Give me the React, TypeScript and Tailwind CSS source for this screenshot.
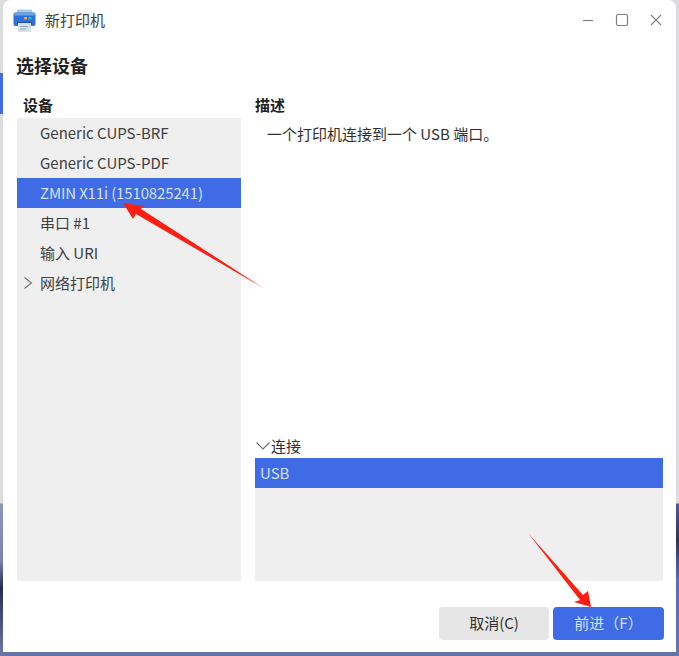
import React from "react";

function PrinterIcon() {
  return (
    <svg width="23" height="23" viewBox="0 0 23 23" className="shrink-0">
      <rect x="4" y="0.5" width="15" height="5" rx="1" fill="#a6cfe4" />
      <path d="M0.5 6 Q0.5 3.5 3 3.5 H20 Q22.5 3.5 22.5 6 V15 Q22.5 17 20.5 17 H2.5 Q0.5 17 0.5 15 Z" fill="#2f6fdc" />
      <rect x="0.5" y="3.5" width="22" height="3" rx="1.5" fill="#6ba5e6" />
      <rect x="11" y="8" width="3" height="2.5" rx="1" fill="#f2b93f" />
      <rect x="15.5" y="8" width="3" height="2.5" rx="1" fill="#35c9b0" />
      <rect x="4" y="13" width="15" height="1.5" fill="#1d4fa8" />
      <rect x="5" y="14" width="13" height="9" fill="#d3e1ea" />
      <rect x="7" y="17" width="8" height="1" fill="#9aa8b4" />
      <rect x="7" y="19.5" width="6" height="1" fill="#9aa8b4" />
    </svg>
  );
}

function Row({ label, selected, arrow }: { label: string; selected?: boolean; arrow?: boolean }) {
  return (
    <div className={`relative flex h-[30px] items-center pl-[23px] text-[15px] ${selected ? "bg-[#3f6ce6] tracking-[-0.14px] text-[#d5e0fa]" : "text-[#404040]"}`}>
      {arrow && (
        <svg width="10" height="14" viewBox="0 0 10 14" className="absolute left-[6px] top-[8px]">
          <path d="M1.5 1.5 L8.5 7 L1.5 12.5" fill="none" stroke="#707070" strokeWidth="1.1" />
        </svg>
      )}
      {label}
    </div>
  );
}

export default function App() {
  return (
    <div className="relative flex h-[656px] w-[679px] overflow-hidden bg-[linear-gradient(to_bottom,#dcdcde_0,#dcdcde_503px,#6472a8_503px,#6472a8_100%)] font-['Noto_Sans_CJK_SC','Noto_Sans',sans-serif] text-[#303030]">
      <div className="flex w-[3px] shrink-0 flex-col bg-[linear-gradient(to_bottom,#dcdcde_0,#dcdcde_503px,#9095bc_504px,#7d83b0_560px,#262d4c_588px,#3a4068_605px,#7078a8_656px)]">
        <div className="h-[73px]" />
        <div className="h-[41px] bg-[#3f6ce6]" />
      </div>
      <div className="flex h-[652px] w-[673px] shrink-0 flex-col rounded-t-[8px] bg-white">
        <div className="flex h-[42px] shrink-0 items-center pl-[10px] pr-[13px]">
          <div className="mb-[1px]">
            <PrinterIcon />
          </div>
          <span className="ml-[9px] pb-[1px] text-[15px] text-[#404040]">新打印机</span>
          <div className="ml-auto flex items-center gap-[20px] pb-[3px] text-[#7a7a7a]">
            <svg width="14" height="14" viewBox="0 0 14 14"><path d="M2 7.5 H12" stroke="#808080" strokeWidth="1.2" /></svg>
            <svg width="14" height="14" viewBox="0 0 14 14"><rect x="1.5" y="1.5" width="11" height="11" rx="1.5" fill="none" stroke="#808080" strokeWidth="1.2" /></svg>
            <svg width="14" height="14" viewBox="0 0 14 14"><path d="M2 2 L12 12 M12 2 L2 12" stroke="#808080" strokeWidth="1.1" /></svg>
          </div>
        </div>
        <div className="flex h-[48px] shrink-0 items-center pl-[13px] pb-[2px] text-[18px] font-bold text-[#222]">选择设备</div>
        <div className="flex min-h-0 flex-1 flex-col pl-[14px] pr-[13px]">
          <div className="flex h-[491px] shrink-0 gap-[14px]">
            <div className="flex w-[224px] shrink-0 flex-col">
              <div className="flex h-[28px] shrink-0 items-center pl-[6px] pt-[2px] text-[15px] font-bold text-[#222]">设备</div>
              <div className="flex-1 bg-[#efefef]">
                <Row label="Generic CUPS-BRF" />
                <Row label="Generic CUPS-PDF" />
                <Row label="ZMIN X11i (1510825241)" selected />
                <Row label="串口 #1" />
                <Row label="输入 URI" />
                <Row label="网络打印机" arrow />
              </div>
            </div>
            <div className="flex min-w-0 flex-1 flex-col">
              <div className="flex h-[28px] shrink-0 items-center pt-[2px] text-[15px] font-bold text-[#222]">描述</div>
              <div className="flex-1 pl-[12px] pt-[5px] text-[15px] leading-[22px]">一个打印机连接到一个 USB 端口。</div>
              <div className="flex h-[24px] shrink-0 items-center text-[15px]">
                <svg width="16" height="10" viewBox="0 0 16 10" className="shrink-0">
                  <path d="M1.5 1.5 L8 8 L14.5 1.5" fill="none" stroke="#707070" strokeWidth="1.1" />
                </svg>
                <span>连接</span>
              </div>
              <div className="h-[123px] shrink-0 bg-[#efefef]">
                <div className="flex h-[30px] items-center bg-[#3f6ce6] pl-[5px] text-[15px] text-[#d5e0fa]">USB</div>
              </div>
            </div>
          </div>
          <div className="flex justify-end gap-[4px] pt-[26px]">
            <button className="h-[33px] w-[110px] rounded-[4px] bg-[#e6e6e6] text-[15px] text-[#303030]">取消(C)</button>
            <button className="mr-[-1px] h-[33px] w-[111px] rounded-[4px] bg-[#3f6ce6] text-[15px] text-[#d5e0fa]">前进（F）</button>
          </div>
        </div>
      </div>
      <div className="w-[3px] shrink-0 bg-[linear-gradient(to_bottom,#dcdcde_0,#dcdcde_503px,#4a5a98_504px,#2c3460_540px,#5070b8_580px,#6478b4_656px)]" />
      <svg width="679" height="656" viewBox="0 0 679 656" className="pointer-events-none absolute left-0 top-0">
        <polygon points="123,203 143,206 141,209 265,289 136,214 133,219" fill="#ff1f12" />
        <polygon points="528,533 583,595 588,591 591,607 574,602 580,600" fill="#ff1f12" />
      </svg>
    </div>
  );
}
